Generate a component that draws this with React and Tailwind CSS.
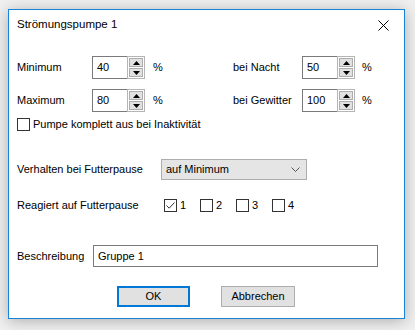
import React from 'react';

const font = { fontFamily: '"Liberation Sans", Arial, sans-serif' };

const Spin = ({ value }) => (
  <div className="flex h-[23px] w-[53px] shrink-0">
    <div className="flex h-full w-[35px] items-center border border-r-0 border-[#7a7a7a] bg-white pl-[4px] text-black">
      {value}
    </div>
    <div className="flex h-full w-[18px] flex-col gap-px border border-[#b5b5b5] bg-white p-px">
      <div className="flex flex-1 items-center justify-center border border-[#adadad] bg-[#e1e1e1]">
        <svg width="7" height="4" viewBox="0 0 7 4">
          <path d="M3.5 0L7 4H0z" fill="#000" />
        </svg>
      </div>
      <div className="flex flex-1 items-center justify-center border border-[#adadad] bg-[#e1e1e1]">
        <svg width="7" height="4" viewBox="0 0 7 4">
          <path d="M0 0H7L3.5 4z" fill="#000" />
        </svg>
      </div>
    </div>
  </div>
);

const Check = ({ checked, label }) => (
  <div className="flex items-center gap-[3px] whitespace-nowrap">
    <div className="flex h-[13px] w-[13px] shrink-0 items-center justify-center border border-[#333] bg-white">
      {checked && (
        <svg width="11" height="11" viewBox="0 0 11 11">
          <path d="M1.5 5.5L4.2 8.2L9.5 2.5" fill="none" stroke="#333" strokeWidth="1" />
        </svg>
      )}
    </div>
    <span className="leading-none">{label}</span>
  </div>
);

export default function App() {
  return (
    <div className="h-[330px] w-[415px] bg-[#f0f0f0] pl-[8px] pt-[9px] text-[11px] text-black" style={font}>
      <div className="flex h-[310px] w-[397px] flex-col border border-[#1883d7] bg-white px-[8px] shadow-[0_2px_14px_rgba(0,0,0,0.28)]">
        {/* title bar */}
        <div className="flex h-[30px] items-center justify-between">
          <span className="text-[11.5px]">Strömungspumpe 1</span>
          <svg width="11" height="11" viewBox="0 0 11 11" className="mr-[7px]">
            <path d="M0.5 0.5L10.5 10.5M10.5 0.5L0.5 10.5" stroke="#000" strokeWidth="1" />
          </svg>
        </div>

        <div className="mt-[16px] flex h-[23px] items-center whitespace-nowrap">
          <span className="w-[75px]">Minimum</span>
          <Spin value="40" />
          <span className="ml-[8px] w-[80px]">%</span>
          <span className="w-[69px]">bei Nacht</span>
          <Spin value="50" />
          <span className="ml-[7px]">%</span>
        </div>

        <div className="mt-[10px] flex h-[23px] items-center whitespace-nowrap">
          <span className="w-[75px]">Maximum</span>
          <Spin value="80" />
          <span className="ml-[8px] w-[80px]">%</span>
          <span className="w-[69px]">bei Gewitter</span>
          <Spin value="100" />
          <span className="ml-[7px]">%</span>
        </div>

        <div className="mt-[6px] flex h-[13px] items-center">
          <Check label="Pumpe komplett aus bei Inaktivität" />
        </div>

        <div className="mt-[28px] flex h-[20px] items-center whitespace-nowrap">
          <span className="w-[144px]">Verhalten bei Futterpause</span>
          <div className="flex h-[21px] w-[146px] items-center justify-between border border-[#adadad] bg-[#e5e5e5] pl-[4px] pr-[6px]">
            <span>auf Minimum</span>
            <svg width="9" height="5" viewBox="0 0 9 5">
              <path d="M0.5 0.5L4.5 4.5L8.5 0.5" fill="none" stroke="#555" strokeWidth="1" />
            </svg>
          </div>
        </div>

        <div className="mt-[20px] flex h-[13px] items-center whitespace-nowrap">
          <span className="w-[147px]">Reagiert auf Futterpause</span>
          <div className="flex">
            <div className="w-[36px]"><Check checked label="1" /></div>
            <div className="w-[36px]"><Check label="2" /></div>
            <div className="w-[36px]"><Check label="3" /></div>
            <div className="w-[36px]"><Check label="4" /></div>
          </div>
        </div>

        <div className="mt-[33px] flex h-[22px] items-center whitespace-nowrap">
          <span className="w-[76px]">Beschreibung</span>
          <div className="flex h-[22px] w-[285px] items-center border border-[#7a7a7a] pl-[4px]">Gruppe 1</div>
        </div>

        <div className="mt-[19px] flex h-[21px] pl-[100px]">
          <button className="h-[21px] w-[73px] border-2 border-[#0078d7] bg-[#e1e1e1]">OK</button>
          <button className="ml-[31px] h-[21px] w-[74px] border border-[#adadad] bg-[#e1e1e1]">Abbrechen</button>
        </div>
      </div>
    </div>
  );
}
